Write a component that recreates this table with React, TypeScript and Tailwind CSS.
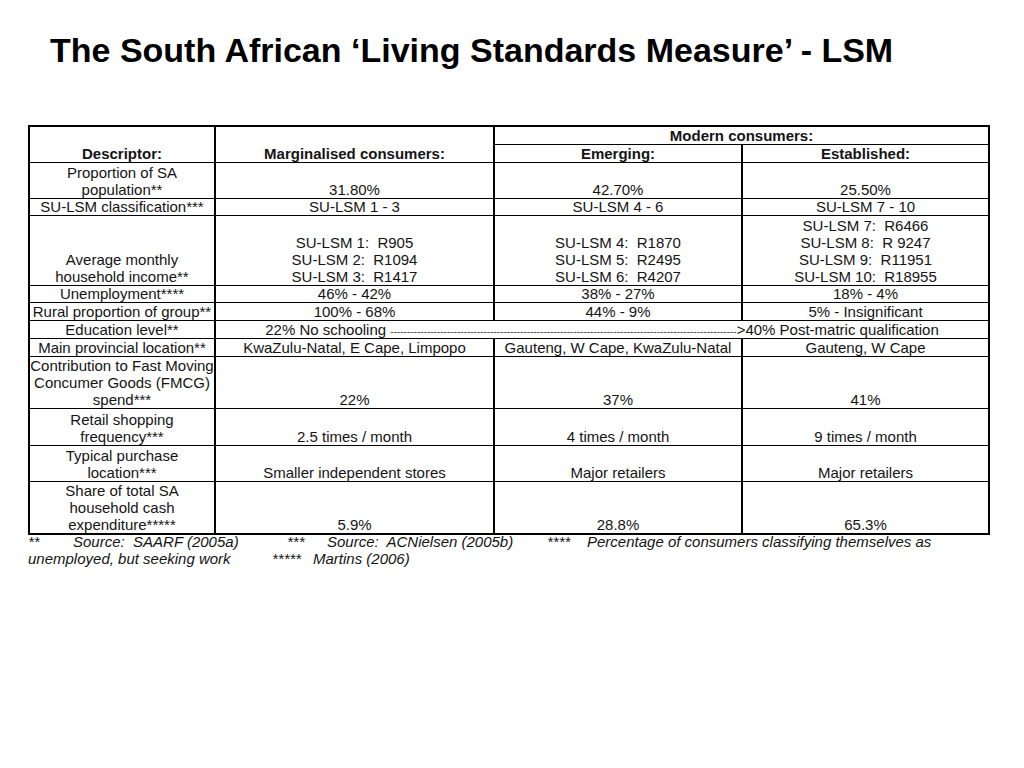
import type { ReactNode } from 'react';

type Row = {
  label: ReactNode;
  h?: string;
  cells: ReactNode[];
};

const td = 'border-x-2 border-y border-black align-bottom text-center p-0';

const rows: Row[] = [
  {
    label: (
      <>
        Proportion of SA
        <br />
        population**
      </>
    ),
    h: 'h-[36px]',
    cells: ['31.80%', '42.70%', '25.50%'],
  },
  {
    label: 'SU-LSM classification***',
    h: 'h-[17px] leading-[16px]',
    cells: ['SU-LSM 1 - 3', 'SU-LSM 4 - 6', 'SU-LSM 7 - 10'],
  },
  {
    label: (
      <>
        Average monthly
        <br />
        household income**
      </>
    ),
    h: 'h-[70px]',
    cells: [
      <>
        SU-LSM 1:&nbsp; R905
        <br />
        SU-LSM 2:&nbsp; R1094
        <br />
        SU-LSM 3:&nbsp; R1417
      </>,
      <>
        SU-LSM 4:&nbsp; R1870
        <br />
        SU-LSM 5:&nbsp; R2495
        <br />
        SU-LSM 6:&nbsp; R4207
      </>,
      <>
        SU-LSM 7:&nbsp; R6466
        <br />
        SU-LSM 8:&nbsp; R 9247
        <br />
        SU-LSM 9:&nbsp; R11951
        <br />
        SU-LSM 10:&nbsp; R18955
      </>,
    ],
  },
  {
    label: 'Unemployment****',
    h: 'h-[17px] leading-[16px]',
    cells: ['46% - 42%', '38% - 27%', '18% - 4%'],
  },
  {
    label: 'Rural proportion of group**',
    cells: ['100% - 68%', '44% - 9%', '5% - Insignificant'],
  },
];

const rowsAfter: Row[] = [
  {
    label: 'Main provincial location**',
    cells: ['KwaZulu-Natal, E Cape, Limpopo', 'Gauteng, W Cape, KwaZulu-Natal', 'Gauteng, W Cape'],
  },
  {
    label: (
      <>
        Contribution to Fast Moving
        <br />
        Concumer Goods (FMCG)
        <br />
        spend***
      </>
    ),
    h: 'h-[52px]',
    cells: ['22%', '37%', '41%'],
  },
  {
    label: (
      <>
        Retail shopping
        <br />
        frequency***
      </>
    ),
    h: 'h-[37px]',
    cells: ['2.5 times / month', '4 times / month', '9 times / month'],
  },
  {
    label: (
      <>
        Typical purchase
        <br />
        location***
      </>
    ),
    h: 'h-[36px]',
    cells: ['Smaller independent stores', 'Major retailers', 'Major retailers'],
  },
  {
    label: (
      <>
        Share of total SA
        <br />
        household cash
        <br />
        expenditure*****
      </>
    ),
    h: 'h-[51px]',
    cells: ['5.9%', '28.8%', '65.3%'],
  },
];

function DataRow({ row }: { row: Row }) {
  return (
    <tr className={row.h ?? 'h-[18px]'}>
      <td className={`${td} whitespace-nowrap`}>{row.label}</td>
      {row.cells.map((c, i) => (
        <td key={i} className={td}>
          {c}
        </td>
      ))}
    </tr>
  );
}

export default function App() {
  return (
    <div className="w-[1024px] h-[768px] bg-white text-[#141414] font-['Liberation_Sans',Arial,sans-serif] overflow-hidden">
      <h1 className="pt-[33px] pl-[50px] text-[34px] leading-none font-bold text-black">
        The South African ‘Living Standards Measure’ - LSM
      </h1>

      <table className="mt-[58px] ml-[28px] w-[960px] table-fixed border-collapse border-2 border-black text-[15px] leading-[17px]">
        <colgroup>
          <col className="w-[186px]" />
          <col className="w-[279px]" />
          <col className="w-[248px]" />
          <col className="w-[247px]" />
        </colgroup>
        <tbody>
          <tr className="h-[18px]">
            <td rowSpan={2} className={`${td} font-bold`}>
              Descriptor:
            </td>
            <td rowSpan={2} className={`${td} font-bold`}>
              Marginalised consumers:
            </td>
            <td colSpan={2} className={`${td} font-bold`}>
              Modern consumers:
            </td>
          </tr>
          <tr className="h-[18px]">
            <td className={`${td} font-bold`}>Emerging:</td>
            <td className={`${td} font-bold`}>Established:</td>
          </tr>
          {rows.map((r, i) => (
            <DataRow key={i} row={r} />
          ))}
          <tr className="h-[18px]">
            <td className={td}>Education level**</td>
            <td colSpan={3} className={`${td} whitespace-nowrap`}>
              22% No schooling{' '}
              <span className="text-[10px] leading-none text-[#444]">{'-'.repeat(104)}</span>
              &gt;40% Post-matric qualification
            </td>
          </tr>
          {rowsAfter.map((r, i) => (
            <DataRow key={i} row={r} />
          ))}
        </tbody>
      </table>

      <div className="ml-[28px] -mt-[2px] text-[15px] leading-[17px] italic whitespace-pre">
        <div className="flex">
          <span className="w-[45px]">**</span>
          <span className="w-[214px]">Source:  SAARF (2005a)</span>
          <span className="w-[40px]">***</span>
          <span className="w-[220px]">Source:  ACNielsen (2005b)</span>
          <span className="w-[40px]">****</span>
          <span>Percentage of consumers classifying themselves as</span>
        </div>
        <div className="flex">
          <span className="w-[244px]">unemployed, but seeking work</span>
          <span className="w-[41px]">*****</span>
          <span>Martins (2006)</span>
        </div>
      </div>
    </div>
  );
}
